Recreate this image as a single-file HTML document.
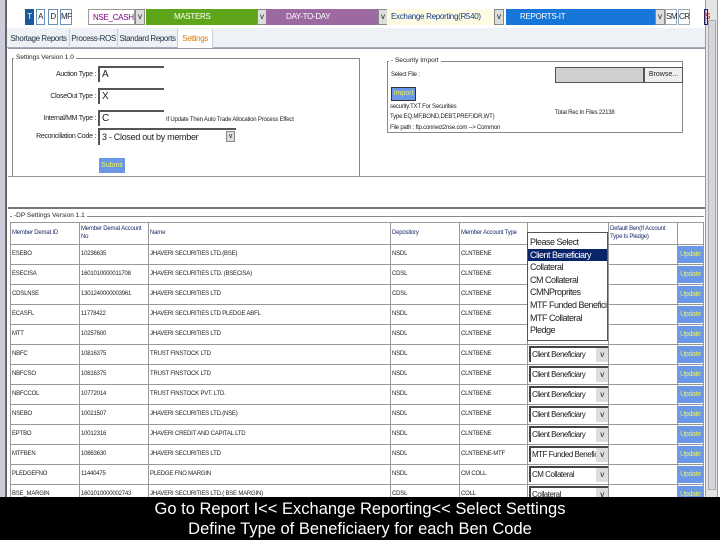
<!DOCTYPE html>
<html><head><meta charset="utf-8"><style>
*{margin:0;padding:0;box-sizing:border-box}
body{width:720px;height:540px;overflow:hidden;background:#fff;position:relative;font-family:"Liberation Sans Narrow","Liberation Sans",sans-serif;font-size:7px;color:#222}
.a{position:absolute}
.btn{position:absolute;top:9px;height:16px;border:1px solid #6a8fb0;font-size:8px;text-align:center;line-height:14px;color:#123;letter-spacing:-0.5px}
.dd{position:absolute;top:9px;height:16px;font-size:8px;line-height:15px;padding-left:4px;white-space:nowrap;overflow:hidden;letter-spacing:-0.3px}
.v{position:absolute;top:9px;height:16px;width:10px;background:#ddd;border:1px solid #888;font-size:8px;text-align:center;line-height:13px}
.tab{position:absolute;top:29px;height:19px;font-size:8px;line-height:19px;border-right:1px solid #ccd;text-align:center;color:#234;letter-spacing:-0.4px;white-space:nowrap}
.lbl{position:absolute;font-size:7px;text-align:right;width:90px;letter-spacing:-0.3px}
.inp{position:absolute;height:16px;width:66px;border-top:2px solid #555;border-left:2px solid #555;background:#fff;font-size:10px;padding-left:2px;line-height:13px}
.hl{position:absolute;height:1px;background:#999}
.vl{position:absolute;width:1px;background:#999}
.c{position:absolute;font-size:6px;color:#222;white-space:nowrap;letter-spacing:-0.2px}
.sel{position:absolute;left:529px;width:79px;height:16px;border-top:2px solid #444;border-left:2px solid #444;background:#fff;font-size:8px;line-height:13px;padding-left:1px;white-space:nowrap;overflow:hidden;letter-spacing:-0.5px}
.sel b{position:absolute;right:0;top:0;width:12px;height:14px;background:#ddd;font-weight:normal;text-align:center;font-size:8px}
.up{position:absolute;left:678px;width:25px;height:17px;background:#6a98e6;color:#e8f060;font-size:7px;text-align:center;line-height:17px;letter-spacing:-0.3px}
.pl div{padding-left:2px;white-space:nowrap;letter-spacing:-0.5px}
</style></head><body>
<div class="a" style="left:0;top:0;width:5px;height:540px;background:#ccd"></div>
<div class="a" style="left:5px;top:0;width:2px;height:540px;background:#666"></div>
<div class="a" style="left:705px;top:0;width:13px;height:540px;background:#e4e4e4;border-left:1px solid #999;border-right:1px solid #999"></div>
<div class="a" style="left:708px;top:20px;width:8px;height:470px;background:#d4d6dc;border:1px solid #aaa"></div>
<div class="btn" style="left:25px;width:9px;background:#1a5a9a;color:#fff;border-color:#1a5a9a">T</div>
<div class="btn" style="left:36px;width:9px">A</div>
<div class="btn" style="left:48px;width:10px">D</div>
<div class="btn" style="left:60px;width:12px">MF</div>
<div class="dd" style="left:88px;width:47px;border:1px solid #999;color:#800080">NSE_CASH</div><div class="v" style="left:135px">v</div>
<div class="dd" style="left:146px;width:111px;background:#5fa51a;color:#fff;padding-left:28px">MASTERS</div><div class="v" style="left:257px">v</div>
<div class="dd" style="left:266px;width:112px;background:#9c6aa0;color:#fff;padding-left:20px">DAY-TO-DAY</div><div class="v" style="left:378px">v</div>
<div class="dd" style="left:387px;width:107px;background:#fdfbe2;color:#123a8a">Exchange Reporting(R540)</div><div class="v" style="left:494px">v</div>
<div class="dd" style="left:506px;width:149px;background:#1777d8;color:#fff;padding-left:14px">REPORTS-IT</div><div class="v" style="left:655px">v</div>
<div class="btn" style="left:665px;width:12px;border-color:#9ab">SM</div>
<div class="btn" style="left:678px;width:12px;border-color:#9ab">CR</div>
<div class="btn" style="left:704px;width:4px;border-color:#226;color:#c00">S</div>
<div class="a" style="left:7px;top:28px;width:698px;height:20px;background:#eef2f6;border-bottom:1px solid #aab"></div>
<div class="tab" style="left:8px;width:62px">Shortage Reports</div>
<div class="tab" style="left:70px;width:48px">Process-ROS</div>
<div class="tab" style="left:118px;width:60px">Standard Reports</div>
<div class="tab" style="left:178px;width:35px;background:#fff;color:#e07a10">Settings</div>
<div class="a" style="left:8px;top:48px;width:697px;height:1px;background:#99a"></div>
<div class="a" style="left:12px;top:58px;width:348px;height:119px;border:1px solid #888"></div>
<div class="a" style="left:14px;top:54px;background:#fff;font-size:6.5px;padding:0 2px">Settings Version 1.0</div>
<div class="lbl" style="left:6px;top:71px">Auction Type :</div><div class="inp" style="left:98px;top:66px">A</div>
<div class="lbl" style="left:6px;top:93px">CloseOut Type :</div><div class="inp" style="left:98px;top:88px">X</div>
<div class="lbl" style="left:6px;top:115px">Internal/MM Type :</div><div class="inp" style="left:98px;top:110px">C</div>
<div class="c" style="left:166px;top:117px">If Update Then Auto Trade Allocation Process Effect</div>
<div class="lbl" style="left:6px;top:133px">Reconciliation Code :</div>
<div class="a" style="left:98px;top:128px;width:138px;height:17px;border-top:2px solid #555;border-left:2px solid #555;font-size:9px;line-height:14px;padding-left:2px;letter-spacing:-0.3px">3 - Closed out by member<span style="position:absolute;right:1px;top:1px;width:9px;height:11px;background:#ddd;border:1px solid #888;font-size:7px;line-height:9px;text-align:center">v</span></div>
<div class="a" style="left:99px;top:158px;width:26px;height:15px;background:#6a98e6;color:#e8f060;font-size:7px;text-align:center;line-height:15px">Submit</div>
<div class="a" style="left:387px;top:61px;width:296px;height:72px;border:1px solid #888"></div>
<div class="a" style="left:389px;top:57px;background:#fff;font-size:6.5px;padding:0 2px">- Security Import</div>
<div class="c" style="left:391px;top:72px">Select File :</div>
<div class="a" style="left:555px;top:67px;width:89px;height:16px;background:#d0d0d0;border:1px solid #555"></div>
<div class="a" style="left:644px;top:67px;width:39px;height:16px;background:#eee;border:1px solid #555;font-size:7px;text-align:center;line-height:14px">Browse...</div>
<div class="a" style="left:391px;top:87px;width:25px;height:14px;background:#6a98e6;border:1px solid #333;color:#e8f060;font-size:7px;text-align:center;line-height:12px">Import</div>
<div class="c" style="left:390px;top:104px">security.TXT For Securities</div>
<div class="c" style="left:390px;top:114px">Type:EQ,MF,BOND,DEBT,PREF,IDR,WT)</div>
<div class="c" style="left:390px;top:125px">File path : ftp.connect2nse.com --> Common</div>
<div class="c" style="left:555px;top:110px">Total Rec In Files 22138</div>
<div class="a" style="left:8px;top:176px;width:697px;height:1px;background:#999"></div>
<div class="a" style="left:8px;top:207px;width:697px;height:2px;background:#777"></div>
<div class="a" style="left:10px;top:216px;width:694px;height:290px;border-top:1px solid #888"></div>
<div class="a" style="left:12px;top:212px;background:#fff;font-size:6.5px;padding:0 2px">-DP Settings Version 1.1</div>
<div class="a" style="left:10px;top:222px;width:694px;height:280px;border:1px solid #999"></div>
<div class="vl" style="left:79px;top:222px;height:280px"></div>
<div class="vl" style="left:148px;top:222px;height:280px"></div>
<div class="vl" style="left:390px;top:222px;height:280px"></div>
<div class="vl" style="left:459px;top:222px;height:280px"></div>
<div class="vl" style="left:527px;top:222px;height:280px"></div>
<div class="vl" style="left:608px;top:222px;height:280px"></div>
<div class="vl" style="left:677px;top:222px;height:280px"></div>
<div class="c" style="left:12px;top:230px;color:#1a2a6a">Member Demat ID</div>
<div class="c" style="left:81px;top:225px;color:#1a2a6a;line-height:8px">Member Demat Account<br>No</div>
<div class="c" style="left:150px;top:230px;color:#1a2a6a">Name</div>
<div class="c" style="left:392px;top:230px;color:#1a2a6a">Depository</div>
<div class="c" style="left:461px;top:230px;color:#1a2a6a">Member Account Type</div>
<div class="c" style="left:610px;top:225px;color:#1a2a6a;line-height:8px">Default Ben(If Account<br>Type Is Pledge)</div>
<div id="rows"></div>
<div class="a pl" style="left:527px;top:232px;width:81px;height:109px;background:#fff;border:1px solid #555;font-size:9px;line-height:12.6px;padding-top:3px;overflow:hidden">
<div>Please Select</div>
<div style="background:#0a246a;color:#fff">Client Beneficiary</div>
<div>Collateral</div>
<div>CM Collateral</div>
<div>CMNProprites</div>
<div>MTF Funded Beneficiry</div>
<div>MTF Collateral</div>
<div>Pledge</div>
</div>
<div class="a" style="left:0;top:497px;width:720px;height:43px;background:#000;color:#fff;text-align:center;font-family:'Liberation Sans',sans-serif;font-size:16.5px;line-height:20px;padding-top:2px">Go to Report I&lt;&lt; Exchange Reporting&lt;&lt; Select Settings<br>Define Type of Beneficiaery for each Ben Code</div>
<script>
var d=[["ESEBO","10236635","JHAVERI SECURITIES LTD.(BSE)","NSDL","CLNTBENE",""],
["ESECISA","1601010000011708","JHAVERI SECURITIES LTD. (BSECISA)","CDSL","CLNTBENE",""],
["CDSLNSE","1301240000003961","JHAVERI SECURITIES LTD","CDSL","CLNTBENE",""],
["ECASFL","11778422","JHAVERI SECURITIES LTD PLEDGE ABFL","NSDL","CLNTBENE",""],
["MTT","10257600","JHAVERI SECURITIES LTD","NSDL","CLNTBENE",""],
["NBFC","10816375","TRUST FINSTOCK LTD","NSDL","CLNTBENE","Client Beneficiary"],
["NBFCSO","10816375","TRUST FINSTOCK LTD","NSDL","CLNTBENE","Client Beneficiary"],
["NBFCCOL","10772014","TRUST FINSTOCK PVT. LTD.","NSDL","CLNTBENE","Client Beneficiary"],
["NSEBO","10021507","JHAVERI SECURITIES LTD.(NSE)","NSDL","CLNTBENE","Client Beneficiary"],
["EPTBO","10012316","JHAVERI CREDIT AND CAPITAL LTD","NSDL","CLNTBENE","Client Beneficiary"],
["MTFBEN","10863630","JHAVERI SECURITIES LTD","NSDL","CLNTBENE-MTF","MTF Funded Beneficiry"],
["PLEDGEFNO","11440475","PLEDGE FNO MARGIN","NSDL","CM COLL","CM Collateral"],
["BSE_MARGIN","1601010000002743","JHAVERI SECURITIES LTD.( BSE MARGIN)","CDSL","COLL","Collateral"]];
var h="",xs=[12,81,150,392,461];
d.forEach(function(r,i){var t=244+20*i;
h+='<div class="hl" style="left:10px;top:'+t+'px;width:694px"></div>';
for(var j=0;j<5;j++)h+='<div class="c" style="left:'+xs[j]+'px;top:'+(t+7)+'px">'+r[j]+'</div>';
if(r[5])h+='<div class="sel" style="top:'+(t+2)+'px">'+r[5]+'<b>v</b></div>';
h+='<div class="up" style="top:'+(t+2)+'px">Update</div>';});
document.getElementById("rows").innerHTML=h;
</script>
</body></html>
